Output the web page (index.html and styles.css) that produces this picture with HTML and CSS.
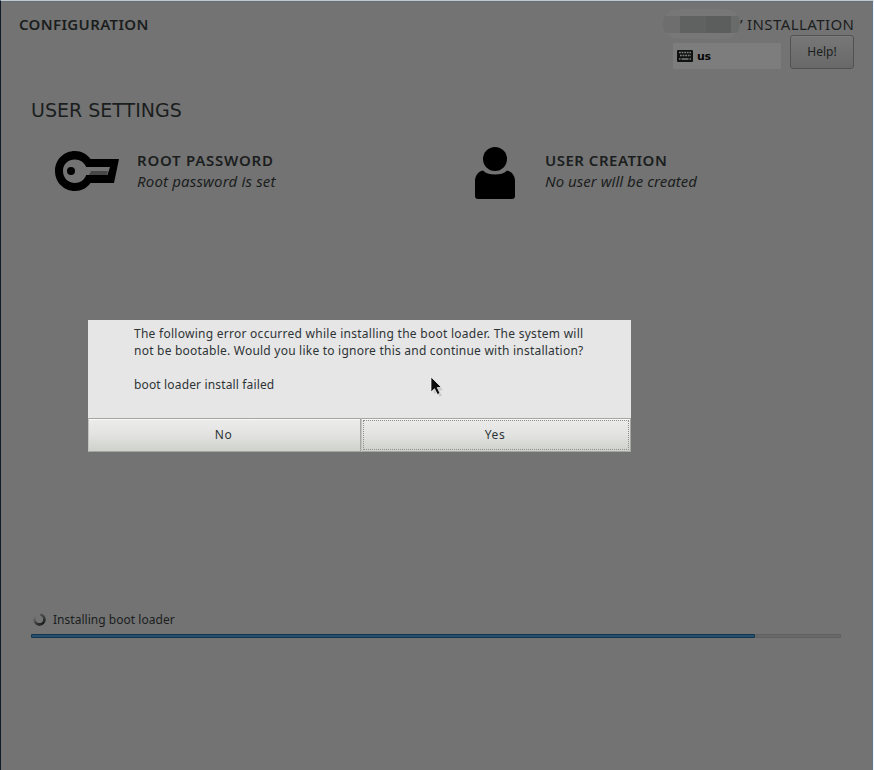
FILE: index.html
```html
<!DOCTYPE html>
<html lang="en">
<head>
<meta charset="utf-8">
<title>Configuration</title>
<link rel="stylesheet" href="styles.css">
</head>
<body>
<div class="installer">
  <header class="topbar">
    <h1 class="page-title"><span class="t-config">CONFIGURATION</span></h1>
    <div class="topbar-right">
      <div class="product"><span class="redacted"><i></i><i></i><i></i><i></i></span><span class="tick">’</span><span class="t-install">INSTALLATION</span></div>
      <div class="tools">
        <div class="keyboard">
          <svg width="16" height="12" viewBox="0 0 16 12"><rect width="16" height="12" rx="1" fill="#101111"/><path d="M2 2.500h12M3 5.500h11" stroke="#7d7d7d" stroke-width="1.600" stroke-dasharray="1.800 .800"/><path d="M2 9h1.500M4.500 9h7M12.500 9h1.500" stroke="#7d7d7d" stroke-width="1.600"/></svg>
          <span class="t-us">us</span>
        </div>
        <button class="help"><span class="t-help">Help!</span></button>
      </div>
    </div>
  </header>
  <main class="content">
    <h2 class="section-title"><span class="t-settings">USER SETTINGS</span></h2>
    <div class="spokes">
      <section class="spoke">
        <svg class="spoke-icon" width="80" height="60" viewBox="0 0 80 60"><path fill="#000" fill-rule="evenodd" d="M20 6C9 6 0 14.500 0 26s9 20 20 20c6.500 0 12-3 15.500-8H59L64 14H35.500C32 9 26.500 6 20 6ZM20 14.500c5 0 9.500 3 11.200 7.500H55L52.500 30H31.200C29.500 35 25 38 20 38c-7 0-12-5-12-12s5-11.500 12-11.500Z"/><circle cx="16" cy="26" r="4" fill="#000"/><path d="M36 26h17l-1.200 4H34z" fill="#474747"/></svg>
        <div class="spoke-text"><h3><span class="t-root">ROOT PASSWORD</span></h3><p><span class="t-rootset">Root password is set</span></p></div>
      </section>
      <section class="spoke">
        <svg class="spoke-icon user" width="60" height="60" viewBox="0 0 60 60"><circle cx="20" cy="14" r="12" fill="#000"/><path d="M8 25.500C11 28.500 15 29.500 20 29.500S29 28.500 32 25.500C37 26.500 40 31 40 36V51Q40 54 37 54H3Q0 54 0 51V36C0 31 3 26.500 8 25.500Z" fill="#000"/></svg>
        <div class="spoke-text"><h3><span class="t-user">USER CREATION</span></h3><p><span class="t-nouser">No user will be created</span></p></div>
      </section>
    </div>
    <div class="progress-block">
      <div class="status"><i class="spinner"></i><span class="t-status">Installing boot loader</span></div>
      <div class="progress"><div class="progress-fill"></div></div>
    </div>
  </main>
  <div class="dialog" role="dialog">
    <div class="message"><p><span class="t-m1">The following error occurred while installing the boot loader. The system will</span></p><p><span class="t-m2">not be bootable. Would you like to ignore this and continue with installation?</span></p><p class="detail"><span class="t-m3">boot loader install failed</span></p></div>
    <div class="actions"><button>No</button><button class="focused">Yes</button></div>
  </div>
  <svg class="pointer" width="16" height="22" viewBox="0 0 16 22"><path d="M3 4l10 10-4 .500 3 5-2.500 1-2.500-5L4 18z" fill="#aaa" opacity=".5"/><path d="M1 1V16L4.500 12.700L7.500 18.500L10 17.300L7.200 11.500H11.500Z" fill="#0c0c0c" stroke="#f8f8f8" stroke-width=".7"/></svg>
</div>
</body>
</html>
```
FILE: styles.css
```css
* { box-sizing: border-box; }
body { margin: 0; font-family: "Noto Sans", "Open Sans", sans-serif; color: #1b1e1e; }
h1, h2, h3, p { margin: 0; font-weight: 400; }
span { white-space: nowrap; }
svg { display: block; flex: none; }
button { margin: 0; padding: 0; font-family: inherit; color: inherit; }

.installer {
  position: relative;
  width: 874px;
  height: 770px;
  overflow: hidden;
  background: #737373;
  border-top: 1px solid #c5c8ca;
  border-left: 1px solid #101b29;
  border-right: 1px solid #f2f4f5;
  box-shadow: inset 0 1px #62707c, inset -1px 0 #62778f;
}

.topbar { display: flex; justify-content: space-between; height: 95px; padding: 11px 19px 0 18px; }
.page-title { font-size: 15px; line-height: 24px; font-weight: 600; letter-spacing: .35px; }
.topbar-right { display: flex; flex-direction: column; align-items: flex-end; }
.product { display: flex; align-items: center; height: 24px; font-size: 15px; line-height: 24px; }
.redacted { display: flex; align-items: center; width: 77px; height: 30px; border-radius: 15px; background: #777; overflow: hidden; }
.redacted i { width: 17px; height: 17px; background: #6d6e6d; }
.redacted i:nth-child(2) { width: 26px; background: #606261; }
.redacted i:nth-child(3) { width: 25px; background: #5c5e5d; }
.redacted i:nth-child(4) { width: 9px; background: #696b6a; }
.tick { width: 7px; }
.t-install { letter-spacing: .42px; margin-right: -.42px; }
.tools { display: flex; align-items: flex-start; gap: 9px; }
.keyboard { display: flex; align-items: center; gap: 4px; width: 108px; height: 26px; margin-top: 7px; padding-left: 4px; background: #7d7d7d; font: bold 11px/26px "DejaVu Sans", sans-serif; letter-spacing: -.4px; color: #070707; }
.t-us { padding-top: 1px; }
.help { width: 64px; height: 34px; margin-top: -1px; padding-bottom: 2px; border: 1px solid #505151; border-radius: 3px; background: linear-gradient(#777, #686968); box-shadow: inset 0 1px #7e7e7e; font-size: 12px; }

.content { padding: 0 32px 0 30px; }
.section-title { font-family: "DejaVu Sans", sans-serif; font-size: 19px; line-height: 28px; height: 49px; }
.spokes { display: grid; grid-template-columns: 420px 1fr; height: 464px; padding-left: 24px; }
.spoke { display: flex; align-items: flex-start; }
.spoke-icon { width: 80px; height: 60px; margin-right: 2px; }
.spoke-icon.user { width: 60px; margin-right: 10px; }
.spoke-text { padding-top: 5px; }
.spoke h3 { font-size: 15px; line-height: 21px; font-weight: 600; }
.t-root { letter-spacing: .75px; }
.t-user { letter-spacing: .5px; }
.spoke p { font-size: 15px; line-height: 20px; font-style: italic; }
.t-rootset { letter-spacing: .17px; }
.t-nouser { letter-spacing: .02px; }

.status { display: flex; align-items: center; height: 20px; font-size: 12px; letter-spacing: .03px; }
.spinner { width: 13px; height: 13px; margin: 0 7px 0 2px; border-radius: 50%; background: conic-gradient(from 10deg, #555, #1d1f1f 35%, #333 55%, #696969 75%, #737373 85%, #737373); -webkit-mask: radial-gradient(circle, transparent 3.3px, #000 4px); mask: radial-gradient(circle, transparent 3.3px, #000 4px); }
.progress { height: 4px; margin-top: 5px; border: 1px solid #606060; border-radius: 1px; background: #696969; }
.progress-fill { width: 724px; height: 4px; margin: -1px; border: 1px solid #12344d; border-radius: 1px; background: #25506f; }

.dialog { position: absolute; left: 87px; top: 319px; width: 543px; height: 132px; display: flex; flex-direction: column; background: #e6e6e6; color: #2e3436; }
.message { flex: 1; padding: 5px 0 0 46px; font-size: 12px; line-height: 17px; }
.t-m1 { letter-spacing: .265px; }
.t-m2 { letter-spacing: .225px; }
.t-m3 { letter-spacing: .15px; }
.detail { margin-top: 17px; }
.actions { display: grid; grid-template-columns: 273px 270px; height: 34px; }
.actions button { position: relative; padding: 0 2px 2px 0; border: 1px solid #a4a6a1; border-left-color: #c3c4c1; background: linear-gradient(#ececec, #e2e3e1 50%, #cfd1cb); box-shadow: inset 0 1px #f9f9f9; font-size: 12px; letter-spacing: .6px; }
.actions .focused::after { content: ""; position: absolute; inset: 1px; border: 1px dotted #8e908c; }

.pointer { position: absolute; left: 429px; top: 375px; }
```
